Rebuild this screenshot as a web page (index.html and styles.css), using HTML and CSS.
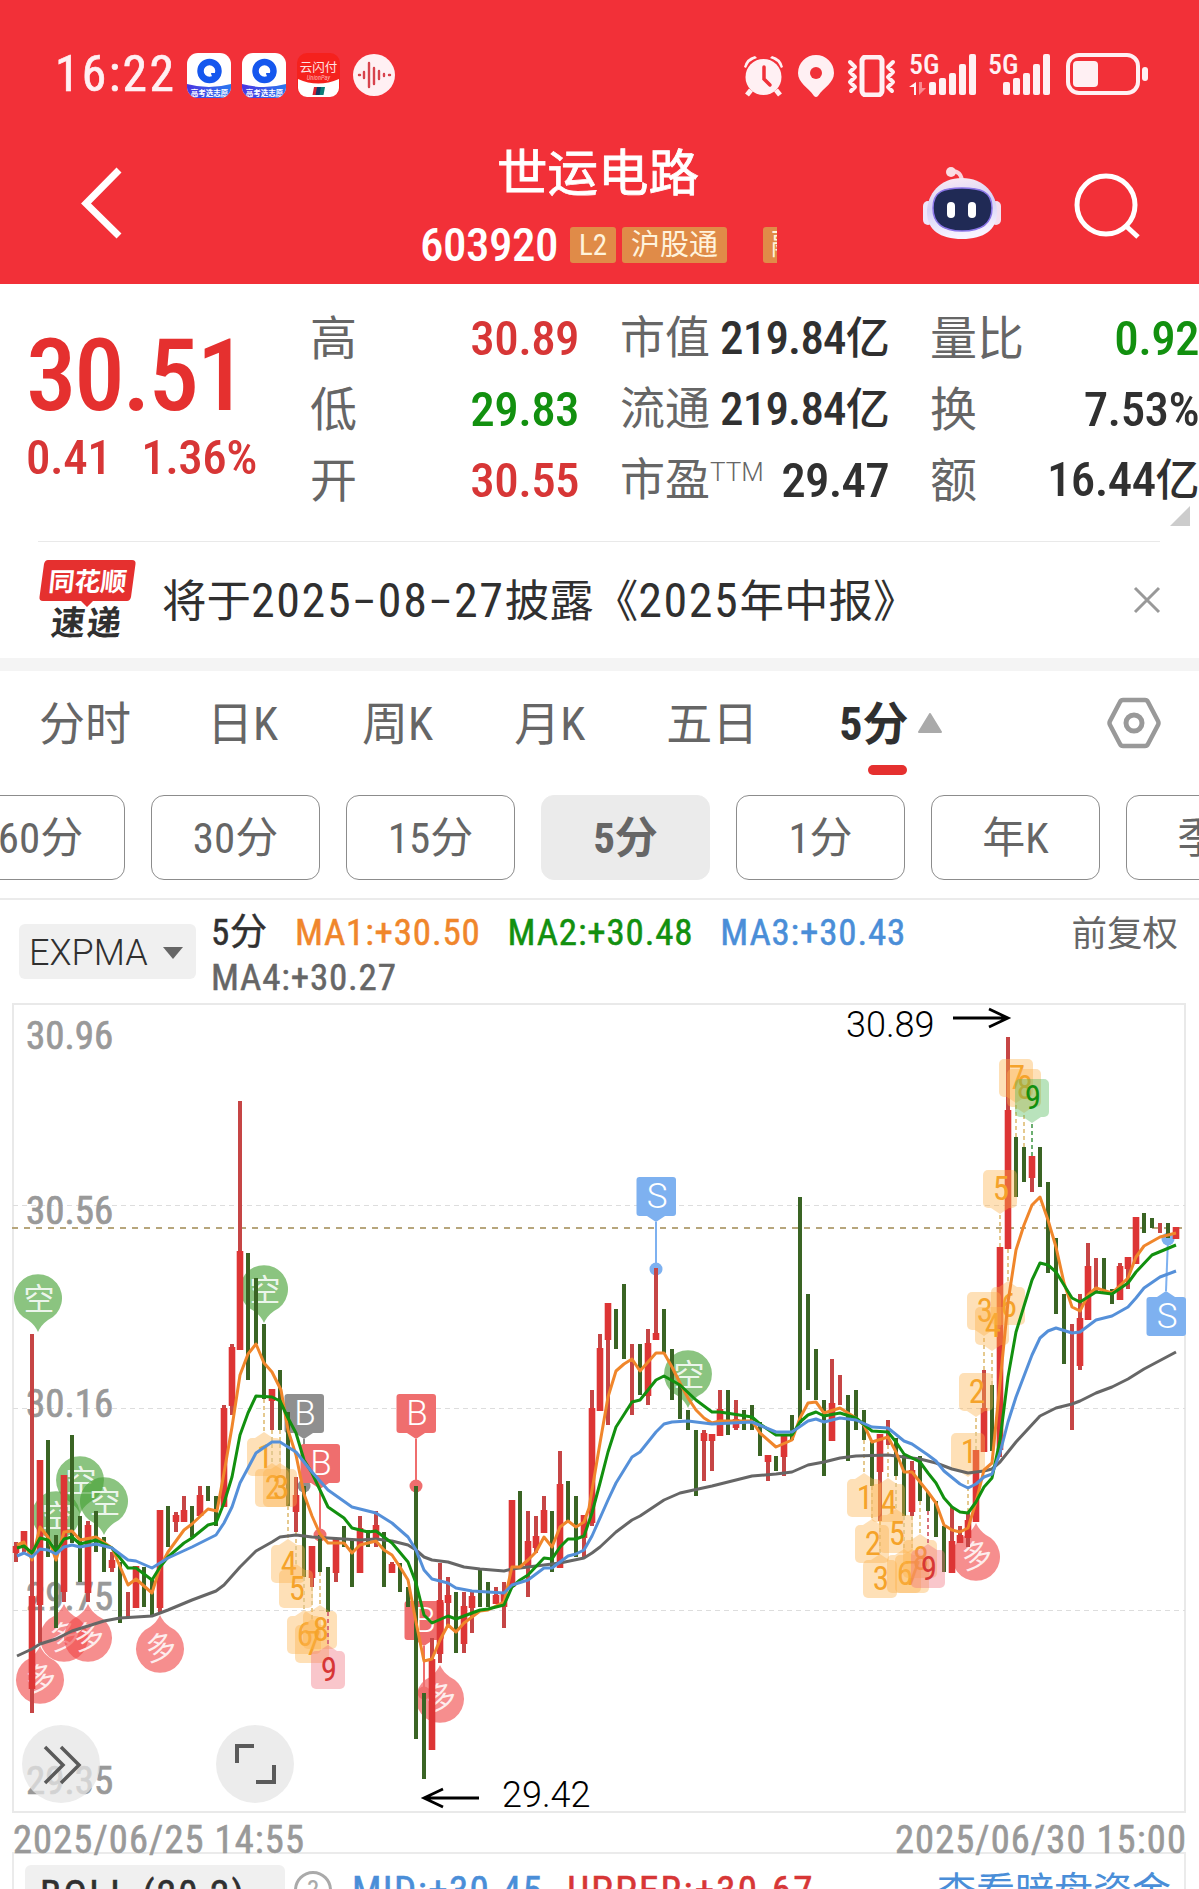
FILE: index.html
```html
<!DOCTYPE html>
<html lang="zh-CN">
<head>
    <meta charset="UTF-8">
    <title>世运电路 603920</title>
    <link rel="stylesheet" href="styles.css">
</head>
<body>
    <header class="header">
        <div class="status-bar">
            <span class="time">16:22</span>
            <div class="app-icons">
                <svg class="app" width="44" height="45" viewBox="0 0 44 45">
                    <defs>
                        <clipPath id="appClip"><rect width="44" height="45" rx="11"/></clipPath>
                        <linearGradient id="appBand"><stop offset="0" stop-color="#4a35e0"/><stop offset="1" stop-color="#2a78f0"/></linearGradient>
                    </defs>
                    <g id="gaokao" clip-path="url(#appClip)">
                        <rect width="44" height="45" fill="#fff"/>
                        <path d="M0 31Q22 37 44 31V45H0Z" fill="url(#appBand)"/>
                        <circle cx="22.500" cy="18" r="9" fill="#fff" stroke="#1557ee" stroke-width="6.500"/>
                        <path d="M24 20h6v5a5 5 0 0 1-6-5Z" fill="#1557ee"/>
                        <text x="22.500" y="42.500" class="app-text">高考选志愿</text>
                    </g>
                </svg>
                <svg class="app" width="44" height="45" viewBox="0 0 44 45"><use href="#gaokao"/></svg>
                <svg class="app" width="43" height="44" viewBox="0 0 43 44">
                    <rect width="43" height="44" rx="10" fill="#f5211d"/>
                    <path d="M1 26Q21 35 42 26V35a9 9 0 0 1-9 9H10a9 9 0 0 1-9-9Z" fill="#fff"/>
                    <text x="21.500" y="18.500" class="app-name">云闪付</text>
                    <text x="21.500" y="27" class="app-sub">UnionPay</text>
                    <path d="M17 34h5l-1.500 8h-5Z" fill="#d8202f"/>
                    <path d="M20 34h5l-1.500 8h-5Z" fill="#123a66"/>
                    <path d="M24 34h4l-1.500 8h-4Z" fill="#0b7c78"/>
                </svg>
                <svg class="app wave" width="42" height="42" viewBox="0 0 42 42">
                    <circle cx="21" cy="21" r="21" fill="#fff0f3"/>
                    <path d="M6 21h1M11 18v6M16 9v24M21 14v16M26 17v8M31 20v2M36 21h1" stroke="#d8434d" stroke-width="2.400" stroke-linecap="round"/>
                </svg>
            </div>
            <div class="system-icons">
                <svg width="41" height="42" viewBox="0 0 41 42" fill="#fff0f3">
                    <circle cx="20.500" cy="22" r="18"/>
                    <path d="M1 12Q3 3 12 1L14 3Q6 5 3 13ZM40 12Q38 3 29 1L27 3Q35 5 38 13Z"/>
                    <path d="M8 35L4 40M33 35L37 40" stroke="#fff0f3" stroke-width="5"/>
                    <path d="M21 12V24L27 30" fill="none" stroke="#f03038" stroke-width="3.500" stroke-linecap="round"/>
                </svg>
                <svg class="pin" width="36" height="42" viewBox="0 0 36 42">
                    <path d="M18 0a18 18 0 0 1 18 18C36 28 26 32 20 41Q18 43 16 41C10 32 0 28 0 18A18 18 0 0 1 18 0Z" fill="#fff0f3"/>
                    <circle cx="18" cy="18" r="6" fill="#f03038"/>
                </svg>
                <svg class="vibrate" width="50" height="42" viewBox="0 0 50 42" fill="none" stroke="#fff0f3">
                    <rect x="15" y="2" width="20" height="38" rx="4" stroke-width="5"/>
                    <path d="M3 7L8 12L3 17L8 22L3 27L8 32L4 36M46 7L41 12L46 17L41 22L46 27L41 32L45 36" stroke-width="4" stroke-linejoin="round" stroke-linecap="round"/>
                </svg>
                <svg class="signal" width="68" height="42" viewBox="0 0 68 42" fill="#fff0f3">
                    <text x="0" y="20" class="net">5G</text>
                    <path d="M7 28V41H5V33H0Z"/>
                    <path d="M10 41V28h3v6h4Z" fill="#f98a90"/>
                    <rect x="20" y="28" width="7" height="13" rx="2"/>
                    <rect x="30" y="24" width="7" height="17" rx="2"/>
                    <rect x="40" y="19" width="7" height="22" rx="2"/>
                    <rect x="50" y="10" width="7" height="31" rx="2"/>
                    <rect x="60" y="0" width="7" height="41" rx="2"/>
                </svg>
                <svg class="signal second" width="63" height="42" viewBox="0 0 63 42" fill="#fff0f3">
                    <text x="0" y="20" class="net">5G</text>
                    <rect x="15" y="28" width="7" height="13" rx="2"/>
                    <rect x="25" y="24" width="7" height="17" rx="2"/>
                    <rect x="35" y="19" width="7" height="22" rx="2"/>
                    <rect x="45" y="10" width="7" height="31" rx="2"/>
                    <rect x="55" y="0" width="7" height="41" rx="2"/>
                </svg>
                <svg class="battery" width="82" height="42" viewBox="0 0 82 42">
                    <rect x="2" y="2" width="70" height="38" rx="11" fill="none" stroke="#fff0f3" stroke-width="4"/>
                    <rect x="7" y="8" width="25" height="26" rx="4" fill="#fff0f3"/>
                    <rect x="76" y="14" width="6" height="14" rx="3" fill="#fff0f3"/>
                </svg>
            </div>
        </div>
        <div class="nav">
            <svg class="back" width="44" height="76" viewBox="0 0 44 76">
                <path d="M39 5L6 38.500L39 71" fill="none" stroke="#fff" stroke-width="7"/>
            </svg>
            <div class="title">
                <h1>世运电路</h1>
                <div class="code-row">
                    <span class="code">603920</span>
                    <span class="tag">L2</span>
                    <span class="tag wide">沪股通</span>
                    <span class="tag cut">融</span>
                </div>
            </div>
            <svg class="robot" width="80" height="76" viewBox="0 0 80 76">
                <defs>
                    <linearGradient id="shell" x1="0" y1="0" x2="0.200" y2="1">
                        <stop offset="0" stop-color="#fdeef4"/><stop offset="0.500" stop-color="#d6d0f5"/><stop offset="1" stop-color="#f7f3ff"/>
                    </linearGradient>
                </defs>
                <path d="M28 6Q40 5 40 18" fill="none" stroke="#fbd3dc" stroke-width="4"/>
                <circle cx="29" cy="7" r="5" fill="#fbdde4"/>
                <rect x="1" y="36" width="10" height="24" rx="5" fill="#eee6fb"/>
                <rect x="69" y="36" width="10" height="24" rx="5" fill="#f3dff0"/>
                <path d="M40 13C62 13 75 29 75 47C75 65 62 74 40 74C18 74 5 65 5 47C5 29 18 13 40 13Z" fill="url(#shell)"/>
                <path d="M40 23C58 23 70 26 70 43C70 60 58 66 40 66C22 66 11 60 11 43C11 26 22 23 40 23Z" fill="#202a55" stroke="#8b76e8" stroke-width="1.500"/>
                <rect x="25" y="37" width="8" height="16" rx="4" fill="#fff"/>
                <rect x="46" y="37" width="8" height="16" rx="4" fill="#fff"/>
            </svg>
            <svg class="search" width="70" height="70" viewBox="0 0 70 70" fill="none" stroke="#fff" stroke-width="5">
                <circle cx="33" cy="34" r="29"/>
                <path d="M53 55L65 66"/>
            </svg>
        </div>
    </header>

    <section class="quote">
        <div class="price-box">
            <div class="price">30.51</div>
            <div class="change"><span>0.41</span><span>1.36%</span></div>
        </div>
        <div class="col">
            <div class="cell"><span class="label">高</span><span class="num up">30.89</span></div>
            <div class="cell"><span class="label">低</span><span class="num down">29.83</span></div>
            <div class="cell"><span class="label">开</span><span class="num up">30.55</span></div>
        </div>
        <div class="col mid">
            <div class="cell"><span class="label">市值</span><span class="num">219.84<i>亿</i></span></div>
            <div class="cell"><span class="label">流通</span><span class="num">219.84<i>亿</i></span></div>
            <div class="cell"><span class="label">市盈<sup>TTM</sup></span><span class="num big">29.47</span></div>
        </div>
        <div class="col">
            <div class="cell"><span class="label">量比</span><span class="num down">0.92</span></div>
            <div class="cell"><span class="label">换</span><span class="num">7.53%</span></div>
            <div class="cell"><span class="label">额</span><span class="num">16.44<i>亿</i></span></div>
        </div>
        <svg class="corner" width="20" height="20" viewBox="0 0 20 20"><path d="M20 0V20H0Z" fill="#ccc"/></svg>
    </section>

    <section class="news">
        <svg class="news-logo" width="98" height="80" viewBox="0 0 98 80">
            <path d="M9 0H93Q97 0 96.500 4L92 37Q91 41 88 41H54L48 47L42 41H4Q0 41 .5 37L5 4Q6 0 9 0Z" fill="#e5302f"/>
            <text x="49" y="31" class="logo-top" transform="skewX(-6) translate(2 0)">同花顺</text>
            <text x="46" y="75" class="logo-bottom" transform="skewX(-6) translate(9 0)">速递</text>
        </svg>
        <p>将于<b>2025</b><b class="dash">–</b><b>08</b><b class="dash">–</b><b>27</b>披露《<b>2025</b>年中报》</p>
        <svg class="close" width="28" height="28" viewBox="0 0 28 28">
            <path d="M2 2L26 26M26 2L2 26" stroke="#999" stroke-width="3"/>
        </svg>
    </section>

    <nav class="tabs">
        <span class="first">分时</span>
        <span class="second">日K</span>
        <span>周K</span>
        <span>月K</span>
        <span>五日</span>
        <span class="active">5分</span>
        <svg class="tri-up" width="24" height="20" viewBox="0 0 24 20"><path d="M12 1L23 19H1Z" fill="#aaa" stroke="#aaa" stroke-linejoin="round" stroke-width="2"/></svg>
        <svg class="hex" width="54" height="52" viewBox="0 0 54 52" fill="none" stroke="#999" stroke-width="4.500">
            <path d="M16 3H38Q40 3 41 5L51 24Q52 26 51 28L41 47Q40 49 38 49H16Q14 49 13 47L3 28Q2 26 3 24L13 5Q14 3 16 3Z"/>
            <circle cx="27" cy="26" r="8" stroke-width="5"/>
        </svg>
    </nav>

    <div class="periods">
        <button>60分</button>
        <button>30分</button>
        <button>15分</button>
        <button class="on">5分</button>
        <button>1分</button>
        <button>年K</button>
        <button>季K</button>
    </div>

    <div class="legend">
        <div class="select">EXPMA<svg width="20" height="12" viewBox="0 0 20 12"><path d="M0 0H20L10 12Z" fill="#666"/></svg></div>
        <div class="ma-list">
            <span class="c-dark">5分</span>
            <span class="c-orange">MA1:+30.50</span>
            <span class="c-green">MA2:+30.48</span>
            <span class="c-blue">MA3:+30.43</span>
            <span class="c-gray">MA4:+30.27</span>
        </div>
        <span class="adjust">前复权</span>
    </div>

    <svg class="chart" id="chart" width="1199" height="811" viewBox="0 1003 1199 811">
        <rect x="13" y="1004" width="1172" height="808" fill="none" stroke="#e9e9e9" stroke-width="2"/>
        <path d="M13 1205.500H1185M13 1408.500H1185M13 1610.500H1185" stroke="#ddd" stroke-dasharray="5 4"/>
        <g id="axis"></g>
        <path d="M12 1228H1183" stroke="#b7a67c" stroke-width="2" stroke-dasharray="6 6"/>
        <g id="pins"></g>
        <g id="candles"></g>
        <g id="counts"></g>
        <g id="lines"></g>
        <g stroke="#000" stroke-width="2.800" fill="none">
            <path d="M953 1018H1008M989 1009L1008 1018L989 1027"/>
            <path d="M479 1798H424M443 1789L424 1798L443 1807"/>
        </g>
        <text x="846" y="1037" class="extreme">30.89</text>
        <text x="502" y="1807" class="extreme">29.42</text>
        <g fill="none" stroke="#5a5a5a" stroke-width="4">
            <circle cx="61" cy="1764" r="39" fill="#e6e6e6" fill-opacity=".75" stroke="none"/>
            <path d="M45 1747L63 1765L45 1783M61 1747L79 1765L61 1783" stroke-width="3.500"/>
            <circle cx="255" cy="1764" r="39" fill="#e6e6e6" fill-opacity=".75" stroke="none"/>
            <path d="M237 1763V1746H254M274 1765V1782H256"/>
        </g>
    </svg>

    <div class="dates"><span>2025/06/25 14:55</span><span>2025/06/30 15:00</span></div>

    <div class="sub-chart">
        <div class="boll">BOLL (20,2)<svg width="20" height="12" viewBox="0 0 20 12"><path d="M0 0H20L10 12Z" fill="#666"/></svg></div>
        <span class="help">?</span>
        <span class="c-blue mid-val">MID:+30.45</span>
        <span class="upper">UPPER:+30.67</span>
        <span class="link">查看暗盘资金</span>
    </div>

    <script src="script.js"></script>
</body>
</html>
```
FILE: styles.css
```css
* {
    margin: 0;
    padding: 0;
    box-sizing: border-box;
}

body {
    width: 1199px;
    height: 1889px;
    overflow: hidden;
    background: #fff;
    color: #303030;
    font-family: "Roboto Condensed", Roboto, "Noto Sans CJK SC", sans-serif;
    font-stretch: 75%;
}

svg {
    display: block;
    flex: none;
}

/* header */
.header {
    height: 284px;
    background: #f23038;
    color: #fff;
}

.status-bar {
    display: flex;
    align-items: flex-start;
    height: 148px;
    padding: 53px 51px 0 55px;
}

.time {
    width: 132px;
    margin-top: -7px;
    font-size: 49.5px;
    line-height: 57px;
    letter-spacing: 2.4px;
    color: #fff0f3;
    -webkit-text-stroke: 0.7px #fff0f3;
}

.app-icons {
    display: flex;
    gap: 11px;
}

.wave {
    margin: 1px 0 0 2px;
}

.app-text {
    font-size: 7.5px;
    font-weight: 700;
    fill: #fff;
    text-anchor: middle;
}

.app-name {
    font-size: 12.5px;
    fill: #ffe3e3;
    text-anchor: middle;
}

.app-sub {
    font-size: 6.5px;
    font-style: italic;
    fill: #ffb0b0;
    text-anchor: middle;
}

.system-icons {
    display: flex;
    margin: 2px 0 0 auto;
}

.pin {
    margin-left: 14px;
}

.vibrate {
    margin-left: 13px;
}

.signal {
    margin: -1px 0 0 12px;
    overflow: visible;
}

.signal.second {
    margin-left: 11px;
}

.net {
    font-size: 28px;
    font-weight: 500;
}

.battery {
    margin: -2px 0 0 15px;
}

.nav {
    display: flex;
    align-items: flex-start;
}

.back {
    margin: 17px 0 0 80px;
}

.title {
    width: 360px;
    margin-left: 296px;
}

.title h1 {
    padding: 1px 0 0 77px;
    font-size: 50.5px;
    font-weight: 400;
    line-height: 50px;
    -webkit-text-stroke: 0.8px #fff;
}

.code-row {
    display: flex;
    align-items: center;
    width: 358px;
    height: 36px;
    margin-top: 28px;
    overflow: hidden;
}

.code {
    width: 150px;
    font-size: 47px;
    font-weight: 500;
    letter-spacing: -0.5px;
    line-height: 36px;
}

.tag {
    width: 46px;
    height: 36px;
    border-radius: 3px;
    background: #e08b48;
    color: #fff3dc;
    font-size: 29px;
    line-height: 36px;
    text-align: center;
}

.tag.wide {
    width: 105px;
    margin-left: 6px;
}

.tag.cut {
    width: 14px;
    margin-left: 36px;
    border-radius: 3px 0 0 3px;
    padding-left: 8px;
    overflow: hidden;
    text-align: left;
}

.robot {
    margin: 17px 0 0 142px;
}

.search {
    margin: 23px 0 0 71px;
}

/* quote */
.quote {
    position: relative;
    display: flex;
    height: 258px;
    padding-top: 19px;
}

.quote::after {
    content: "";
    position: absolute;
    left: 38px;
    right: 39px;
    bottom: 0;
    height: 1px;
    background: #e9e9e9;
}

.price-box {
    width: 310px;
    padding-left: 26px;
    color: #e5302f;
}

.price {
    margin-top: 14px;
    font-size: 101px;
    font-weight: 500;
    line-height: 118px;
    letter-spacing: -2.2px;
}

.change {
    display: flex;
    gap: 30px;
    margin-top: -6px;
    font-size: 49px;
    font-weight: 500;
    line-height: 58px;
    letter-spacing: -0.5px;
    color: #d73636;
}

.col {
    width: 269px;
    margin-right: 41px;
}

.col:nth-of-type(4) {
    width: 269px;
    margin-right: 0;
}

.cell {
    display: flex;
    justify-content: space-between;
    align-items: center;
    height: 71px;
    white-space: nowrap;
}

.label {
    font-size: 47px;
    line-height: 70px;
    color: #666;
}

.mid .label {
    font-size: 45px;
}

.label sup {
    font-family: Roboto, sans-serif;
    font-stretch: 100%;
    font-weight: 300;
    font-size: 26px;
    line-height: 1;
    vertical-align: 15px;
}

.num {
    font-size: 49px;
    font-weight: 500;
    letter-spacing: -0.6px;
    line-height: 70px;
}

.num i {
    font-size: 44px;
    font-style: normal;
}

.mid .num {
    font-size: 47px;
    letter-spacing: -0.8px;
}

.mid .num.big {
    font-size: 49px;
}

.up {
    color: #d73636;
}

.down {
    color: #12900f;
}

.corner {
    position: absolute;
    right: 9px;
    top: 222px;
}

/* news */
.news {
    display: flex;
    height: 129px;
    border-bottom: 13px solid #f4f4f4;
}

.news-logo {
    margin: 18px 0 0 39px;
}

.logo-top {
    font-size: 26px;
    font-weight: 700;
    fill: #fff;
    text-anchor: middle;
}

.logo-bottom {
    font-size: 34px;
    font-weight: 700;
    fill: #303030;
    text-anchor: middle;
    letter-spacing: 2px;
}

.news p {
    margin: 25px 0 0 25px;
    font-size: 44.5px;
    line-height: 70px;
    white-space: nowrap;
}

.news b {
    display: inline-block;
    font-size: 48px;
    font-weight: 400;
    letter-spacing: 1.6px;
    line-height: 60px;
}

.news b.dash {
    font-size: 42px;
}

.close {
    margin: 44px 38px 0 auto;
}

/* tabs */
.tabs {
    display: flex;
    height: 124px;
    padding-left: 39px;
    font-size: 46px;
    line-height: 106px;
    color: #666;
    white-space: nowrap;
}

.tabs span {
    margin-right: 81px;
}

.tabs .first {
    margin-right: 76px;
}

.tabs .second {
    margin-right: 84px;
}

.tabs .active {
    position: relative;
    margin-right: 9px;
    font-weight: 700;
    color: #303030;
}

.active::after {
    content: "";
    position: absolute;
    left: 29px;
    top: 94px;
    width: 39px;
    height: 10px;
    border-radius: 5px;
    background: #e5302f;
}

.tri-up {
    margin-top: 42px;
}

.hex {
    margin: 26px 38px 0 auto;
}

.periods {
    display: flex;
    gap: 26px;
    height: 105px;
    margin-left: -44px;
    border-bottom: 2px solid #ebebeb;
    overflow: hidden;
}

.periods button {
    flex: none;
    width: 169px;
    height: 85px;
    border: 1px solid #8c8c8c;
    border-radius: 13px;
    background: #fff;
    color: #666;
    font: inherit;
    font-size: 43px;
    line-height: 82px;
}

.periods .on {
    border-color: #ebebeb;
    background: #ebebeb;
    font-weight: 700;
}

/* indicator row */
.legend {
    display: flex;
    height: 103px;
    font-size: 37px;
}

.select {
    display: flex;
    align-items: center;
    justify-content: space-between;
    width: 177px;
    height: 55px;
    margin: 24px 15px 0 19px;
    padding: 2px 13px 0 10px;
    border-radius: 6px;
    background: #f0f0f0;
    font-family: Roboto, sans-serif;
    font-size: 36px;
    font-weight: 300;
    font-stretch: 95%;
}

.ma-list {
    display: flex;
    flex-wrap: wrap;
    align-content: flex-start;
    column-gap: 27px;
    width: 720px;
    margin-top: 10px;
    letter-spacing: 0.8px;
    line-height: 45px;
    -webkit-text-stroke: 0.5px currentColor;
}

.c-dark {
    color: #303030;
}

.c-orange {
    color: #f0862b;
}

.c-green {
    color: #12900f;
}

.c-blue {
    color: #4a8ed8;
}

.c-gray {
    color: #666;
}

.adjust {
    margin: 10px 21px 0 auto;
    font-size: 35.5px;
    line-height: 48px;
    color: #666;
}

.axis {
    font-size: 39px;
    fill: #999;
    stroke: #999;
    stroke-width: 0.7px;
}

.extreme {
    font-family: Roboto, sans-serif;
    font-stretch: 90%;
    font-size: 36px;
    font-weight: 300;
    fill: #000;
}

.pin-text {
    font-size: 31px;
    fill: #fff;
    fill-opacity: 0.85;
    text-anchor: middle;
}

.box-text {
    font-family: Roboto, sans-serif;
    font-size: 35px;
    font-weight: 300;
    font-stretch: 90%;
    fill: #fff;
    text-anchor: middle;
}

.count-text {
    font-family: Roboto, sans-serif;
    font-stretch: 85%;
    font-size: 33px;
    text-anchor: middle;
}

.dates {
    display: flex;
    justify-content: space-between;
    height: 38px;
    padding: 0 12px 0 13px;
    font-size: 38.5px;
    letter-spacing: 1.1px;
    line-height: 51px;
    color: #999;
    -webkit-text-stroke: 0.6px #999;
}

/* lower indicator */
.sub-chart {
    display: flex;
    height: 60px;
    margin: 0 13px 0 12px;
    border: 2px solid #ebebeb;
    font-size: 39px;
    line-height: 58px;
    white-space: nowrap;
    -webkit-text-stroke: 0.6px currentColor;
}

.boll {
    display: flex;
    align-items: center;
    justify-content: space-between;
    width: 260px;
    height: 60px;
    margin: 11px 9px 0 11px;
    padding: 0 15px;
    border-radius: 6px;
    background: #f0f0f0;
    letter-spacing: 2.3px;
}

.help {
    flex: none;
    width: 38px;
    height: 38px;
    margin: 17px 20px 0 0;
    border: 3px solid #aaa;
    border-radius: 50%;
    color: #aaa;
    font-size: 28px;
    line-height: 34px;
    text-align: center;
    -webkit-text-stroke: 0;
}

.mid-val,
.upper {
    margin: 8px 24px 0 0;
    letter-spacing: 1.4px;
}

.upper {
    color: #d73636;
    letter-spacing: 2.2px;
}

.link {
    margin: 9px 13px 0 auto;
    color: #4a8ed8;
    -webkit-text-stroke: 0;
}
```
FILE: script.js
```js
const GREEN = '#3a6424';
const RED = '#dd3535';
const WICK = '#c64545';

// one candle every 8px: [type, high, low, bodyTop, bodyBottom]
const candles = [
    ['r', 1542, 1562, 1546, 1553], ['r', 1531, 1552, 1531, 1546], ['r', 1334, 1713, 1596, 1689], ['r', 1460, 1643, 1460, 1605],
    ['g', 1440, 1557], ['g', 1535, 1628], ['r', 1475, 1602, 1475, 1592], ['g', 1435, 1543], ['g', 1516, 1582],
    ['r', 1521, 1602, 1525, 1593], ['g', 1511, 1552], ['g', 1537, 1572], ['r', 1552, 1572, 1560, 1568], ['g', 1562, 1623],
    ['r', 1592, 1618, 1592, 1592], ['r', 1566, 1608, 1566, 1608], ['g', 1567, 1607], ['g', 1580, 1617], ['r', 1510, 1613, 1510, 1608],
    ['g', 1506, 1547], ['r', 1512, 1532, 1515, 1522], ['r', 1496, 1522, 1510, 1522], ['g', 1506, 1537], ['r', 1486, 1516, 1495, 1516],
    ['g', 1486, 1501], ['g', 1496, 1526], ['r', 1405, 1507, 1408, 1507], ['r', 1344, 1415, 1347, 1406], ['r', 1101, 1350, 1251, 1350],
    ['g', 1253, 1380], ['g', 1278, 1344], ['g', 1324, 1399], ['r', 1389, 1430, 1389, 1401], ['g', 1370, 1430], ['g', 1412, 1506],
    ['r', 1477, 1532, 1495, 1512], ['g', 1486, 1577], ['r', 1546, 1587, 1546, 1578], ['g', 1535, 1572], ['g', 1567, 1612],
    ['r', 1538, 1582, 1538, 1573], ['g', 1526, 1547], ['g', 1540, 1587], ['r', 1516, 1573, 1528, 1573], ['g', 1530, 1547],
    ['r', 1511, 1547, 1525, 1540], ['g', 1532, 1587], ['r', 1562, 1573, 1564, 1573], ['g', 1563, 1592], ['g', 1587, 1607],
    ['g', 1486, 1739], ['g', 1693, 1779], ['r', 1638, 1750, 1659, 1750], ['r', 1563, 1663, 1600, 1654], ['r', 1577, 1627, 1595, 1603],
    ['g', 1592, 1653], ['r', 1592, 1653, 1606, 1644], ['r', 1592, 1633, 1596, 1608], ['g', 1569, 1607], ['g', 1582, 1607],
    ['r', 1587, 1604, 1595, 1604], ['r', 1582, 1628, 1593, 1607], ['r', 1500, 1587, 1500, 1587], ['g', 1491, 1567],
    ['r', 1511, 1597, 1541, 1568], ['r', 1516, 1553, 1536, 1548], ['r', 1496, 1533, 1510, 1533], ['g', 1511, 1572],
    ['r', 1451, 1568, 1484, 1568], ['g', 1481, 1522], ['g', 1496, 1557], ['r', 1515, 1557, 1515, 1538], ['r', 1390, 1526, 1408, 1523],
    ['r', 1334, 1411, 1348, 1411], ['r', 1303, 1425, 1303, 1340], ['g', 1309, 1349], ['g', 1284, 1359], ['r', 1344, 1415, 1344, 1344],
    ['g', 1344, 1395], ['r', 1329, 1405, 1343, 1396], ['r', 1268, 1340, 1333, 1340], ['g', 1309, 1353], ['g', 1349, 1400],
    ['g', 1385, 1419], ['g', 1410, 1430], ['g', 1430, 1496], ['r', 1430, 1481, 1433, 1441], ['r', 1434, 1471, 1434, 1441],
    ['r', 1390, 1436, 1409, 1436], ['g', 1390, 1435], ['r', 1400, 1430, 1419, 1428], ['g', 1410, 1430], ['g', 1405, 1430],
    ['g', 1422, 1456], ['r', 1455, 1481, 1455, 1462], ['g', 1456, 1471], ['r', 1436, 1476, 1436, 1457], ['g', 1415, 1440],
    ['g', 1197, 1423], ['g', 1294, 1390], ['g', 1349, 1400], ['g', 1400, 1476], ['r', 1359, 1441, 1403, 1441],
    ['r', 1375, 1405, 1375, 1375], ['g', 1395, 1461], ['g', 1390, 1430], ['g', 1410, 1440], ['g', 1442, 1486],
    ['r', 1434, 1521, 1434, 1472], ['r', 1420, 1445, 1420, 1420], ['g', 1438, 1476], ['g', 1455, 1516], ['r', 1461, 1516, 1470, 1512],
    ['g', 1456, 1501], ['g', 1492, 1511], ['g', 1501, 1537], ['g', 1526, 1572], ['r', 1507, 1573, 1541, 1573],
    ['r', 1526, 1543, 1535, 1543], ['r', 1512, 1547, 1520, 1538], ['r', 1450, 1522, 1450, 1522], ['r', 1370, 1452, 1408, 1452],
    ['g', 1385, 1451], ['r', 1247, 1457, 1247, 1450], ['r', 1037, 1249, 1110, 1249], ['g', 1137, 1197], ['g', 1147, 1182],
    ['r', 1156, 1192, 1156, 1178], ['g', 1147, 1187], ['g', 1182, 1273], ['g', 1238, 1314], ['g', 1294, 1364],
    ['r', 1324, 1430, 1324, 1324], ['r', 1294, 1370, 1318, 1366], ['r', 1243, 1320, 1266, 1320], ['r', 1258, 1293, 1258, 1258],
    ['g', 1258, 1292], ['g', 1289, 1304], ['r', 1263, 1300, 1266, 1300], ['r', 1257, 1289, 1257, 1269], ['r', 1217, 1264, 1217, 1264],
    ['g', 1213, 1233], ['g', 1218, 1228], ['r', 1223, 1233, 1223, 1223], ['g', 1223, 1238], ['r', 1227, 1239, 1227, 1239]
];

const lines = {
    '#666': '17,1656 32,1649 40,1644 56,1639 72,1631 88,1626 104,1621 120,1618 136,1617 152,1616 168,1610 192,1600 216,1591 224,1585 240,1567 256,1551 272,1542 280,1537 296,1535 312,1537 328,1538 360,1540 376,1539 392,1541 408,1545 416,1550 424,1557 432,1560 448,1562 464,1567 480,1569 504,1571 512,1569 528,1567 544,1565 560,1563 584,1558 592,1553 600,1547 616,1532 632,1520 640,1516 664,1500 680,1493 712,1486 752,1476 776,1474 792,1472 808,1465 824,1462 840,1458 856,1456 888,1455 904,1457 920,1459 936,1463 952,1469 968,1473 984,1471 992,1469 1000,1462 1016,1442 1040,1416 1056,1408 1072,1404 1080,1401 1096,1393 1112,1387 1128,1379 1144,1369 1176,1352',
    '#f0862b': '17,1545 24,1542 32,1560 40,1527 48,1537 56,1560 64,1532 72,1531 80,1540 96,1537 112,1548 128,1585 136,1579 152,1593 160,1567 168,1552 184,1530 192,1524 208,1509 217,1511 224,1473 232,1427 240,1375 248,1354 256,1344 264,1363 272,1372 281,1390 288,1430 296,1455 304,1494 312,1516 320,1534 328,1543 344,1543 352,1553 360,1545 376,1541 384,1550 392,1555 400,1567 408,1580 416,1622 424,1661 432,1659 440,1640 448,1625 456,1632 464,1623 480,1611 488,1610 504,1602 512,1567 520,1567 528,1560 536,1552 544,1537 552,1547 560,1527 568,1521 576,1527 584,1522 589,1508 600,1443 608,1397 616,1371 624,1364 632,1359 640,1371 656,1353 664,1353 672,1367 680,1383 688,1398 696,1410 704,1418 712,1423 720,1421 752,1421 760,1433 776,1447 792,1440 800,1418 808,1403 816,1402 824,1413 840,1408 856,1418 864,1425 872,1442 888,1437 896,1452 904,1472 912,1472 928,1492 936,1503 944,1525 952,1530 960,1532 968,1528 976,1502 984,1470 992,1463 1000,1383 1008,1302 1016,1250 1024,1225 1032,1205 1040,1197 1048,1220 1056,1247 1064,1283 1072,1307 1080,1311 1088,1295 1096,1288 1112,1293 1128,1278 1136,1257 1144,1246 1160,1237 1176,1233',
    '#12900f': '17,1548 24,1546 32,1553 40,1538 48,1540 56,1551 64,1539 72,1537 80,1544 96,1540 112,1548 128,1568 136,1568 152,1580 160,1567 168,1557 184,1543 192,1538 208,1525 216,1523 224,1503 232,1477 240,1435 248,1413 256,1396 272,1397 280,1401 288,1418 296,1433 304,1460 312,1473 328,1507 344,1518 352,1528 368,1532 376,1531 392,1543 408,1562 416,1583 424,1615 432,1623 448,1616 456,1619 472,1613 480,1610 488,1609 504,1605 512,1587 520,1580 528,1575 544,1558 552,1559 560,1547 568,1539 576,1539 584,1536 592,1513 600,1483 608,1452 616,1427 632,1402 640,1400 656,1380 664,1376 680,1385 696,1400 712,1412 720,1412 752,1417 760,1424 776,1435 792,1435 800,1422 808,1415 816,1412 824,1416 840,1413 856,1418 872,1431 888,1432 896,1442 904,1454 920,1462 928,1473 936,1483 944,1498 952,1507 960,1512 968,1513 976,1502 984,1487 992,1478 1000,1440 1008,1377 1016,1332 1032,1280 1040,1263 1048,1265 1056,1272 1072,1298 1080,1302 1096,1292 1112,1294 1128,1283 1136,1272 1152,1255 1176,1245',
    '#5590d9': '17,1556 24,1553 32,1557 40,1549 48,1550 56,1554 64,1547 72,1545 80,1547 96,1544 112,1548 128,1560 136,1561 152,1568 168,1558 192,1547 216,1535 224,1523 232,1507 240,1483 256,1453 272,1442 280,1442 288,1447 296,1452 312,1472 328,1490 352,1507 376,1513 392,1523 408,1537 416,1550 424,1570 432,1579 448,1583 456,1588 472,1591 504,1593 512,1585 528,1580 544,1568 552,1568 568,1556 576,1554 584,1550 592,1536 608,1500 616,1483 632,1457 640,1452 656,1432 664,1424 672,1422 688,1421 712,1424 752,1422 776,1432 792,1432 808,1421 816,1419 824,1422 840,1418 856,1420 872,1427 888,1428 904,1441 912,1444 928,1455 936,1461 944,1471 960,1484 968,1488 976,1484 984,1477 992,1474 1000,1453 1008,1422 1016,1397 1032,1355 1040,1338 1048,1331 1056,1328 1072,1333 1080,1332 1096,1320 1112,1316 1128,1307 1136,1298 1144,1288 1160,1277 1176,1271'
};

// [x, centre y, text]
const pins = [
    [38, 1299, '空'], [264, 1290, '空'], [80, 1481, '空'], [56, 1516, '空'], [104, 1502, '空'], [688, 1375, '空'],
    [64, 1637, '多'], [88, 1637, '多'], [40, 1679, '多'], [160, 1648, '多'], [440, 1698, '多'], [976, 1556, '多']
];

// [x, box top, text, colour, dot x, dot y]
const trades = [
    [304, 1394, 'B', '#8f8f8f', 304, 1486],
    [320, 1444, 'B', '#ef6e6e', 320, 1535],
    [416, 1394, 'B', '#ef6e6e', 416, 1486],
    [424, 1601, 'B', '#ef6e6e', 424, 1693],
    [656, 1177, 'S', '#7eb1f0', 656, 1269],
    [1166, 1297, 'S', '#7eb1f0', 1168, 1239]
];

// [x, box top, number, y of the candle end]
const counts = [
    [264, 1438, 1, 1399], [272, 1469, 2, 1430], [280, 1469, 3, 1430], [288, 1545, 4, 1506], [296, 1570, 5, 1532],
    [304, 1616, 6, 1577], [312, 1625, 7, 1587], [320, 1611, 8, 1572], [328, 1651, 9, 1612, 'red'],
    [864, 1479, 1, 1440], [872, 1525, 2, 1486], [880, 1560, 3, 1521], [888, 1484, 4, 1445], [896, 1515, 5, 1476],
    [904, 1555, 6, 1516], [912, 1555, 7, 1516], [920, 1540, 8, 1501], [928, 1550, 9, 1511, 'red'],
    [968, 1433, 1, 1512], [976, 1373, 2, 1450], [984, 1292, 3, 1370], [992, 1307, 4, 1385], [1000, 1170, 5, 1247],
    [1008, 1287, 6, 1249], [1016, 1059, 7, 1137], [1024, 1069, 8, 1147], [1032, 1079, 9, 1156, 'green']
];

const palette = {
    orange: ['#fdb24a', '#f5a32a', '#e5c98f'],
    red: ['#f0707c', '#d73636', '#d9707a'],
    green: ['#4fb858', '#12900f', '#6cae70']
};

const put = (id, html) => { document.getElementById(id).innerHTML = html; };

put('axis', [['30.96', 1049], ['30.56', 1224], ['30.16', 1417], ['29.75', 1610], ['29.35', 1794]]
    .map(([t, y]) => `<text class="axis" x="26" y="${y}">${t}</text>`).join(''));

put('candles', candles.map(([type, high, low, top, bottom], i) => {
    const x = 16 + i * 8;
    if (type === 'g') {
        return `<rect x="${x - 2}" y="${high}" width="4" height="${low - high}" fill="${GREEN}"/>`;
    }
    return `<rect x="${x - 2}" y="${high}" width="4" height="${low - high}" fill="${WICK}"/>` +
        `<rect x="${x - 3.3}" y="${top}" width="6.600" height="${bottom - top}" fill="${RED}"/>`;
}).join(''));

put('lines', Object.entries(lines).map(([color, points]) =>
    `<polyline points="${points}" fill="none" stroke="${color}" stroke-width="3" stroke-linejoin="round"/>`).join(''));

const pinHtml = pins.map(([x, y, text]) => {
    const dir = text === '空' ? 1 : -1;
    const color = dir === 1 ? '#43a032' : '#f04848';
    return `<path d="M${x - 10} ${y + 21 * dir}Q${x - 3} ${y + 26 * dir} ${x} ${y + 33 * dir}Q${x + 3} ${y + 26 * dir} ${x + 10} ${y + 21 * dir}` +
        `A24 24 0 1 ${dir === 1 ? 0 : 1} ${x - 10} ${y + 21 * dir}Z" fill="${color}" fill-opacity=".62"/>` +
        `<text class="pin-text" x="${x + 1}" y="${y + 11}"${dir === -1 ? ` transform="rotate(-12 ${x} ${y})"` : ''}>${text}</text>`;
}).join('');

const tradeHtml = trades.map(([x, y, text, color, dx, dy]) => {
    const below = dy > y;
    const edge = below ? y + 39 : y;
    const tip = below ? edge + 6 : edge - 6;
    return `<path d="M${x} ${tip}L${dx} ${dy}" stroke="${color}" stroke-width="2"/>` +
        `<circle cx="${dx}" cy="${dy}" r="6.500" fill="${color}"/>` +
        `<rect x="${x - 19.5}" y="${y}" width="39.500" height="39" rx="3" fill="${color}"/>` +
        `<path d="M${x - 9} ${edge}L${x} ${tip}L${x + 9} ${edge}Z" fill="${color}"/>` +
        `<text class="box-text" x="${x + 1}" y="${y + 31}">${text}</text>`;
}).join('');

put('pins', pinHtml + tradeHtml);

put('counts', counts.map(([x, y, n, end, tone]) => {
    const [fill, ink, dash] = palette[tone || 'orange'];
    const up = end < y;
    const edge = up ? y : y + 38;
    const tip = up ? edge - 6 : edge + 6;
    return `<path d="M${x} ${end}V${tip}" stroke="${dash}" stroke-width="2" stroke-dasharray="4 3"/>` +
        `<rect x="${x - 17}" y="${y}" width="34" height="38" rx="5" fill="${fill}" fill-opacity=".4"/>` +
        `<path d="M${x - 9} ${edge}L${x} ${tip}L${x + 9} ${edge}Z" fill="${fill}" fill-opacity=".4"/>` +
        `<text class="count-text" x="${x + 1}" y="${y + 30}" fill="${ink}">${n}</text>`;
}).join(''));
```
